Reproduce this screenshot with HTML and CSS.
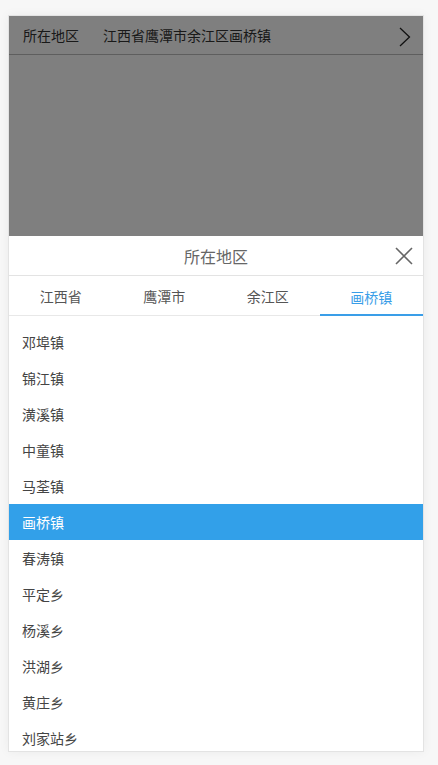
FILE: index.html
```
<!DOCTYPE html>
<html lang="zh">
<head>
<meta charset="utf-8">
<title>所在地区</title>
<link rel="stylesheet" href="styles.css">
</head>
<body>
<div class="frame">
  <div class="topbar">
    <span class="label">所在地区</span>
    <span class="value">江西省鹰潭市余江区画桥镇</span>
    <svg class="chev" width="12" height="20" viewBox="0 0 12 20"><path d="M1 1 L10.5 10 L1 19" fill="none" stroke="#222" stroke-width="1.3"/></svg>
  </div>
  <div class="overlay"></div>
  <div class="sheet">
    <div class="sheet-head">
      <span class="title">所在地区</span>
      <svg class="close" width="18" height="18" viewBox="0 0 18 18"><path d="M1 1 L17 17 M17 1 L1 17" fill="none" stroke="#666" stroke-width="1.6"/></svg>
    </div>
    <div class="tabs">
      <div class="tab">江西省</div>
      <div class="tab">鹰潭市</div>
      <div class="tab">余江区</div>
      <div class="tab active">画桥镇</div>
    </div>
    <ul class="list">
      <li>邓埠镇</li>
      <li>锦江镇</li>
      <li>潢溪镇</li>
      <li>中童镇</li>
      <li>马荃镇</li>
      <li class="selected">画桥镇</li>
      <li>春涛镇</li>
      <li>平定乡</li>
      <li>杨溪乡</li>
      <li>洪湖乡</li>
      <li>黄庄乡</li>
      <li>刘家站乡</li>
    </ul>
  </div>
</div>
</body>
</html>
```
FILE: styles.css
```
* { box-sizing: border-box; }
html, body { margin: 0; padding: 0; }
body {
  background: #f7f7f7;
  font-family: "Noto Sans CJK SC", "Noto Sans", sans-serif;
  padding: 15px 0 0 8px;
  height: 765px;
  overflow: hidden;
}
.frame {
  position: relative;
  width: 416px;
  height: 737px;
  background: #fff;
  border: 1px solid #e3e3e3;
  box-shadow: 0 0 10px rgba(0,0,0,0.05);
  overflow: hidden;
}
.topbar {
  display: flex;
  align-items: center;
  height: 39px;
  padding: 0 12px 0 14px;
  border-bottom: 1px solid #bcbcbc;
  font-size: 14px;
  color: #333;
}
.topbar .label { width: 80px; }
.topbar .value { flex: 1; }
.chev { display: block; margin-top: 3px; }
.overlay {
  position: absolute;
  inset: 0;
  background: rgba(0,0,0,0.5);
}
.sheet {
  position: absolute;
  left: 0;
  right: 0;
  top: 220px;
  bottom: 0;
  background: #fff;
}
.sheet-head {
  position: relative;
  height: 40px;
  border-bottom: 1px solid #e3e3e3;
  display: flex;
  align-items: center;
  justify-content: center;
}
.title { font-size: 16px; color: #666; }
.close {
  position: absolute;
  right: 10px;
  top: 11px;
}
.tabs {
  display: grid;
  grid-template-columns: repeat(4, 1fr);
  height: 40px;
  border-bottom: 1px solid #e8e8e8;
}
.tab {
  display: flex;
  align-items: center;
  justify-content: center;
  font-size: 14px;
  color: #555;
  padding-top: 1px;
}
.tab.active {
  color: #3a9ee8;
  border-bottom: 2px solid #3a9ee8;
  margin-bottom: -1px;
  padding-top: 3px;
}
.list {
  list-style: none;
  margin: 0;
  padding: 8px 0 0;
}
.list li {
  height: 36px;
  display: flex;
  align-items: center;
  padding-left: 13px;
  font-size: 14px;
  color: #444;
}
.list li.selected {
  background: #32a0e9;
  color: #fff;
}
```
